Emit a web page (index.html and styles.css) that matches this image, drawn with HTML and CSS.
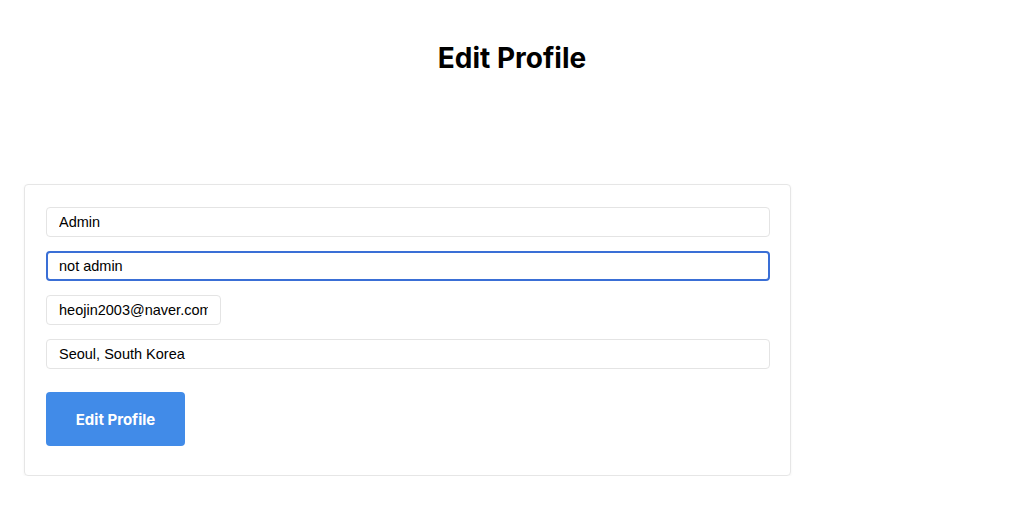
FILE: index.html
```html
<!DOCTYPE html>
<html>
	<head>
		<meta charset="utf-8">
		<title>Edit Profile</title>
		<link rel="stylesheet" href="styles.css">
	</head>
	<body>
		<h1 class="title">Edit Profile</h1>
		<form class="card">
			<input class="field" type="text" value="Admin">
			<input class="field focus" type="text" value="not admin">
			<input class="field short" type="email" value="heojin2003@naver.com">
			<input class="field" type="text" value="Seoul, South Korea">
			<button class="btn" type="button">Edit Profile</button>
		</form>
	</body>
</html>
```

FILE: styles.css
```css
* {margin:0; padding:0; box-sizing:border-box;}
body{
	background:#fff;
	font-family:Inter, "Liberation Sans", sans-serif;
	color:#000;
}
.title{
	margin-top:41px;
	text-align:center;
	font-size:28px;
	font-weight:700;
	line-height:34px;
}
.card{
	width:767px;
	margin:109px 0 0 24px;
	padding:22px 20px 29px 21px;
	border:1px solid #e6e6e6;
	border-radius:4px;
	box-shadow:0 1px 3px rgba(0,0,0,0.05);
	display:flex;
	flex-direction:column;
	align-items:flex-start;
	gap:14px;
}
.field{
	width:100%;
	height:30px;
	padding:0 12px;
	border:1px solid #e4e4e4;
	border-radius:4px;
	font-family:"Liberation Sans", Arial, sans-serif;
	font-size:14.5px;
	color:#000;
	outline:none;
	background:#fff;
}
.field.focus{
	border:2px solid #3a6fd6;
	padding:0 11px;
}
.field.short{
	width:175px;
}
.btn{
	margin-top:9px;
	width:139px;
	height:54px;
	border:none;
	border-radius:4px;
	background:#418be8;
	color:#fff;
	font-family:Inter, "Liberation Sans", sans-serif;
	font-size:15px;
	font-weight:700;
	cursor:pointer;
}
```
